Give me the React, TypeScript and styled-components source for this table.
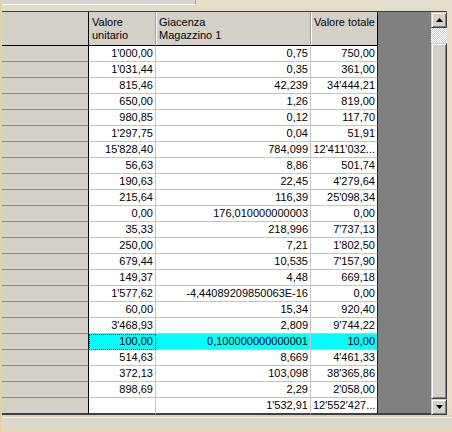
import React from 'react';
import styled, { createGlobalStyle, css } from 'styled-components';

const Global = createGlobalStyle`
  html, body { margin: 0; padding: 0; background: #e4ddc9; }
  body { font-family: "Liberation Sans", Arial, sans-serif; font-size: 11px; color: #000; }
`;

const Page = styled.div`
  width: 452px;
  height: 432px;
  display: flex;
  overflow: hidden;
  background: #e4ddc9;
`;

const LeftEdge = styled.div`
  width: 2px;
  flex: none;
  background: linear-gradient(90deg, #e6cf8c, #ddd6c2);
`;

const Main = styled.div`
  flex: 1;
  display: flex;
  flex-direction: column;
`;

const TopStrip = styled.div`
  height: 11px;
  flex: none;
  background: #e2dccb;
`;

const Tab = styled.div`
  width: 193px;
  height: 4px;
  background: #d8d4cc;
  border-bottom: 1px solid #ffffff;
  border-right: 1px solid #a29e92;
`;

const Body = styled.div`
  display: flex;
  flex: none;
`;

const Frame = styled.div`
  display: flex;
  border-top: 1px solid #404040;
`;

const RightMargin = styled.div`
  width: 5px;
  flex: none;
  background: #e4ddc9;
`;

const Table = styled.div`
  display: grid;
  grid-template-columns: 87px 67px 155px 67px;
  grid-template-rows: 34px repeat(22, 16px) 17px;
  flex: none;
`;

const HeaderCell = styled.div<{ $edge?: boolean; $hl?: boolean }>`
  box-sizing: border-box;
  background: #d4d0c8;
  border-bottom: 1px solid #000;
  border-right: 1px solid ${p => (p.$edge ? '#000' : '#a09c94')};
  ${p => p.$hl && css`box-shadow: inset 1px 0 0 #ffffff;`}
  padding: 4px 2px 0 3px;
  line-height: 13px;
  white-space: pre;
  overflow: hidden;
`;

const RowHead = styled.div<{ $last?: boolean }>`
  box-sizing: border-box;
  background: #d4d0c8;
  border-right: 1px solid #000;
  border-bottom: ${p => (p.$last ? '2px solid #404040' : '1px solid #8a8780')};
`;

const Cell = styled.div<{ $last?: boolean; $edge?: boolean; $sel?: boolean; $focus?: boolean }>`
  box-sizing: border-box;
  background: ${p => (p.$sel ? '#00ffff' : '#ffffff')};
  border-right: 1px solid ${p => (p.$edge ? '#202020' : '#c4c4c4')};
  border-bottom: ${p => (p.$last ? '2px solid #404040' : '1px solid #c4c4c4')};
  text-align: right;
  padding: 1px 2px 0 2px;
  line-height: 13px;
  white-space: nowrap;
  overflow: hidden;
  ${p => p.$focus && css`outline: 1px dotted #3a3a3a; outline-offset: -1px;`}
`;

const GrayArea = styled.div`
  width: 53px;
  flex: none;
  box-sizing: border-box;
  background: #808080;
  border-bottom: 2px solid #404040;
`;

const Scrollbar = styled.div`
  width: 16px;
  flex: none;
  display: flex;
  flex-direction: column;
`;

const raised = css`
  box-sizing: border-box;
  background: #d4d0c8;
  border: 1px solid;
  border-color: #d4d0c8 #404040 #404040 #d4d0c8;
  box-shadow: inset 1px 1px 0 #ffffff, inset -1px -1px 0 #808080;
`;

const ScrollButton = styled.div`
  ${raised};
  height: 16px;
  flex: none;
  display: flex;
  align-items: center;
  justify-content: center;
`;

const Track = styled.div`
  height: 15px;
  flex: none;
  background: repeating-conic-gradient(#ffffff 0 25%, #d4d0c8 0 50%) 0 0 / 2px 2px;
`;

const Thumb = styled.div`
  ${raised};
  flex: 1;
`;

const BottomStrip = styled.div`
  flex: 1;
  box-sizing: border-box;
  background: #ddd8cb;
  border-top: 2px solid #d6d2c8;
  box-shadow: inset 0 1px 0 #f4f2ec;
  border-bottom: 2px solid #e6d7ae;
`;

const Arrow = ({ down }: { down?: boolean }) => (
  <svg width="7" height="4" viewBox="0 0 7 4">
    <path d={down ? 'M0 0H7L3.5 4Z' : 'M3.5 0L7 4H0Z'} fill="#000" />
  </svg>
);

type Row = [string, string, string];

const rows: Row[] = [
  ["1'000,00", '0,75', '750,00'],
  ["1'031,44", '0,35', '361,00'],
  ['815,46', '42,239', "34'444,21"],
  ['650,00', '1,26', '819,00'],
  ['980,85', '0,12', '117,70'],
  ["1'297,75", '0,04', '51,91'],
  ["15'828,40", '784,099', "12'411'032..."],
  ['56,63', '8,86', '501,74'],
  ['190,63', '22,45', "4'279,64"],
  ['215,64', '116,39', "25'098,34"],
  ['0,00', '176,010000000003', '0,00'],
  ['35,33', '218,996', "7'737,13"],
  ['250,00', '7,21', "1'802,50"],
  ['679,44', '10,535', "7'157,90"],
  ['149,37', '4,48', '669,18'],
  ["1'577,62", '-4,44089209850063E-16', '0,00'],
  ['60,00', '15,34', '920,40'],
  ["3'468,93", '2,809', "9'744,22"],
  ['100,00', '0,100000000000001', '10,00'],
  ['514,63', '8,669', "4'461,33"],
  ['372,13', '103,098', "38'365,86"],
  ['898,69', '2,29', "2'058,00"],
  ['', "1'532,91", "12'552'427..."],
];

const SELECTED = 18;

export default function App() {
  return (
    <>
      <Global />
      <Page>
        <LeftEdge />
        <Main>
          <TopStrip>
            <Tab />
          </TopStrip>
          <Body>
            <Frame>
              <Table>
                <HeaderCell $edge />
                <HeaderCell>{'Valore\nunitario'}</HeaderCell>
                <HeaderCell $hl>{'Giacenza\nMagazzino 1'}</HeaderCell>
                <HeaderCell $hl $edge>Valore totale</HeaderCell>
                {rows.map((r, i) => {
                  const last = i === rows.length - 1;
                  const sel = i === SELECTED;
                  return (
                    <React.Fragment key={i}>
                      <RowHead $last={last} />
                      <Cell $last={last} $sel={sel} $focus={sel}>{r[0]}</Cell>
                      <Cell $last={last} $sel={sel}>{r[1]}</Cell>
                      <Cell $last={last} $sel={sel} $edge>{r[2]}</Cell>
                    </React.Fragment>
                  );
                })}
              </Table>
              <GrayArea />
              <Scrollbar>
                <ScrollButton><Arrow /></ScrollButton>
                <Track />
                <Thumb />
                <ScrollButton><Arrow down /></ScrollButton>
              </Scrollbar>
            </Frame>
            <RightMargin />
          </Body>
          <BottomStrip />
        </Main>
      </Page>
    </>
  );
}
